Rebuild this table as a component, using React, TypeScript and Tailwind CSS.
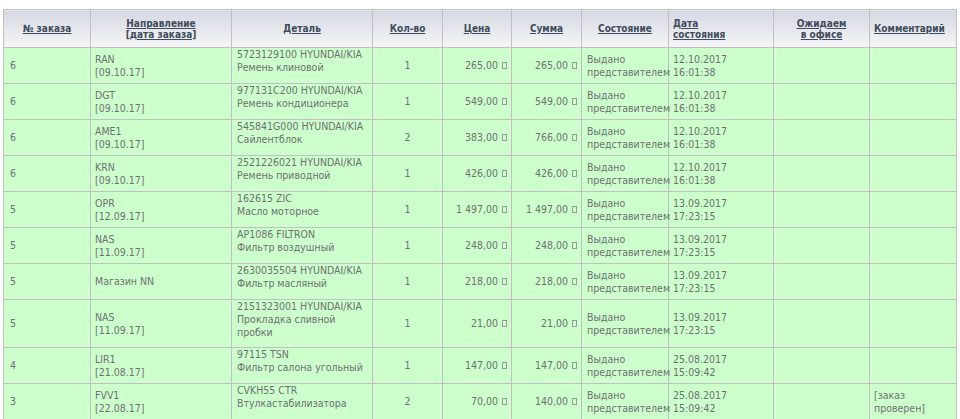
import React from "react";

type Row = {
  n: string;
  dir: string[];
  det: string[];
  q: string;
  p: string;
  s: string;
  d: string[];
  c?: string[];
  h?: number;
  pink?: boolean;
};

const rows: Row[] = [
  { n: "6", dir: ["RAN", "[09.10.17]"], det: ["5723129100 HYUNDAI/KIA", "Ремень клиновой"], q: "1", p: "265,00", s: "265,00", d: ["12.10.2017", "16:01:38"] },
  { n: "6", dir: ["DGT", "[09.10.17]"], det: ["977131C200 HYUNDAI/KIA", "Ремень кондиционера"], q: "1", p: "549,00", s: "549,00", d: ["12.10.2017", "16:01:38"] },
  { n: "6", dir: ["AME1", "[09.10.17]"], det: ["545841G000 HYUNDAI/KIA", "Сайлентблок"], q: "2", p: "383,00", s: "766,00", d: ["12.10.2017", "16:01:38"] },
  { n: "6", dir: ["KRN", "[09.10.17]"], det: ["2521226021 HYUNDAI/KIA", "Ремень приводной"], q: "1", p: "426,00", s: "426,00", d: ["12.10.2017", "16:01:38"] },
  { n: "5", dir: ["OPR", "[12.09.17]"], det: ["162615 ZIC", "Масло моторное"], q: "1", p: "1 497,00", s: "1 497,00", d: ["13.09.2017", "17:23:15"] },
  { n: "5", dir: ["NAS", "[11.09.17]"], det: ["AP1086 FILTRON", "Фильтр воздушный"], q: "1", p: "248,00", s: "248,00", d: ["13.09.2017", "17:23:15"] },
  { n: "5", dir: ["Магазин NN"], det: ["2630035504 HYUNDAI/KIA", "Фильтр масляный"], q: "1", p: "218,00", s: "218,00", d: ["13.09.2017", "17:23:15"] },
  { n: "5", dir: ["NAS", "[11.09.17]"], det: ["2151323001 HYUNDAI/KIA", "Прокладка сливной", "пробки"], q: "1", p: "21,00", s: "21,00", d: ["13.09.2017", "17:23:15"], h: 47 },
  { n: "4", dir: ["LIR1", "[21.08.17]"], det: ["97115 TSN", "Фильтр салона угольный"], q: "1", p: "147,00", s: "147,00", d: ["25.08.2017", "15:09:42"] },
  { n: "3", dir: ["FVV1", "[22.08.17]"], det: ["CVKH55 CTR", "Втулкастабилизатора"], q: "2", p: "70,00", s: "140,00", d: ["25.08.2017", "15:09:42"], c: ["[заказ", "проверен]"] },
  { n: "3", dir: ["FVV1", "[22.08.17]"], det: ["CVKH55 CTR", "Втулкастабилизатора"], q: "2", p: "70,00", s: "140,00", d: ["25.08.2017", "15:09:42"], pink: true },
];

const Cur = () => (
  <span className="inline-block w-[5px] h-[7px] border border-[#9a9a9a] ml-[4px]" />
);

const Lines = ({ l }: { l: string[] }) => (
  <>
    {l.map((t, i) => (
      <div key={i} className="whitespace-nowrap">
        {t}
      </div>
    ))}
  </>
);

const th =
  "border border-[#c3bec3] align-middle font-bold text-[10px] leading-[11px] text-[#3e4c5c] underline bg-gradient-to-b from-[#d5d8e2] to-[#f6f6f8] px-[4px]";
const td = "border border-[#c3bec3] align-middle px-[5px] py-0";

export default function App() {
  return (
    <div
      className="bg-white w-[960px] h-[419px] overflow-hidden pt-[9px] pl-[3px]"
      style={{ fontFamily: '"DejaVu Sans Condensed", "DejaVu Sans", sans-serif', fontStretch: "condensed" }}
    >
      <table className="border-collapse table-fixed w-[953px] text-[10.5px] leading-[13px] text-[#707070]">
        <colgroup>
          <col className="w-[87px]" />
          <col className="w-[141px]" />
          <col className="w-[141px]" />
          <col className="w-[70px]" />
          <col className="w-[69px]" />
          <col className="w-[70px]" />
          <col className="w-[87px]" />
          <col className="w-[105px]" />
          <col className="w-[96px]" />
          <col className="w-[87px]" />
        </colgroup>
        <thead>
          <tr className="h-[38px]">
            <th className={`${th} text-center`}>№ заказа</th>
            <th className={`${th} text-center`}>
              Направление
              <br />
              [дата заказа]
            </th>
            <th className={`${th} text-center`}>Деталь</th>
            <th className={`${th} text-center`}>Кол-во</th>
            <th className={`${th} text-center`}>Цена</th>
            <th className={`${th} text-center`}>Сумма</th>
            <th className={`${th} text-center`}>Состояние</th>
            <th className={`${th} text-left`}>
              Дата
              <br />
              состояния
            </th>
            <th className={`${th} text-center`}>
              Ожидаем
              <br />в офисе
            </th>
            <th className={`${th} text-left`}>Комментарий</th>
          </tr>
        </thead>
        <tbody>
          {rows.map((r, i) => (
            <tr
              key={i}
              className={r.pink ? "bg-[#ffcccc]" : "bg-[#ccffcc]"}
              style={{ height: (r.h ?? 35) + 1 }}
            >
              <td className={`${td} pl-[6px]`}>{r.n}</td>
              <td className={`${td} pl-[4px]`}>
                <Lines l={r.dir} />
              </td>
              <td className={`${td} align-top pt-0 pl-[5px]`}>
                <Lines l={r.det} />
              </td>
              <td className={`${td} text-center`}>{r.q}</td>
              <td className={`${td} text-right pr-[4px] whitespace-nowrap`}>
                {r.p}
                <Cur />
              </td>
              <td className={`${td} text-right pr-[4px] whitespace-nowrap`}>
                {r.s}
                <Cur />
              </td>
              <td className={`${td} pl-[5px] pr-0`}>
                <div>Выдано</div>
                <div>представителем</div>
              </td>
              <td className={`${td} pl-[4px]`}>
                <Lines l={r.d} />
              </td>
              <td className={td}></td>
              <td className={`${td} pl-[4px]`}>{r.c ? <Lines l={r.c} /> : null}</td>
            </tr>
          ))}
        </tbody>
      </table>
    </div>
  );
}
